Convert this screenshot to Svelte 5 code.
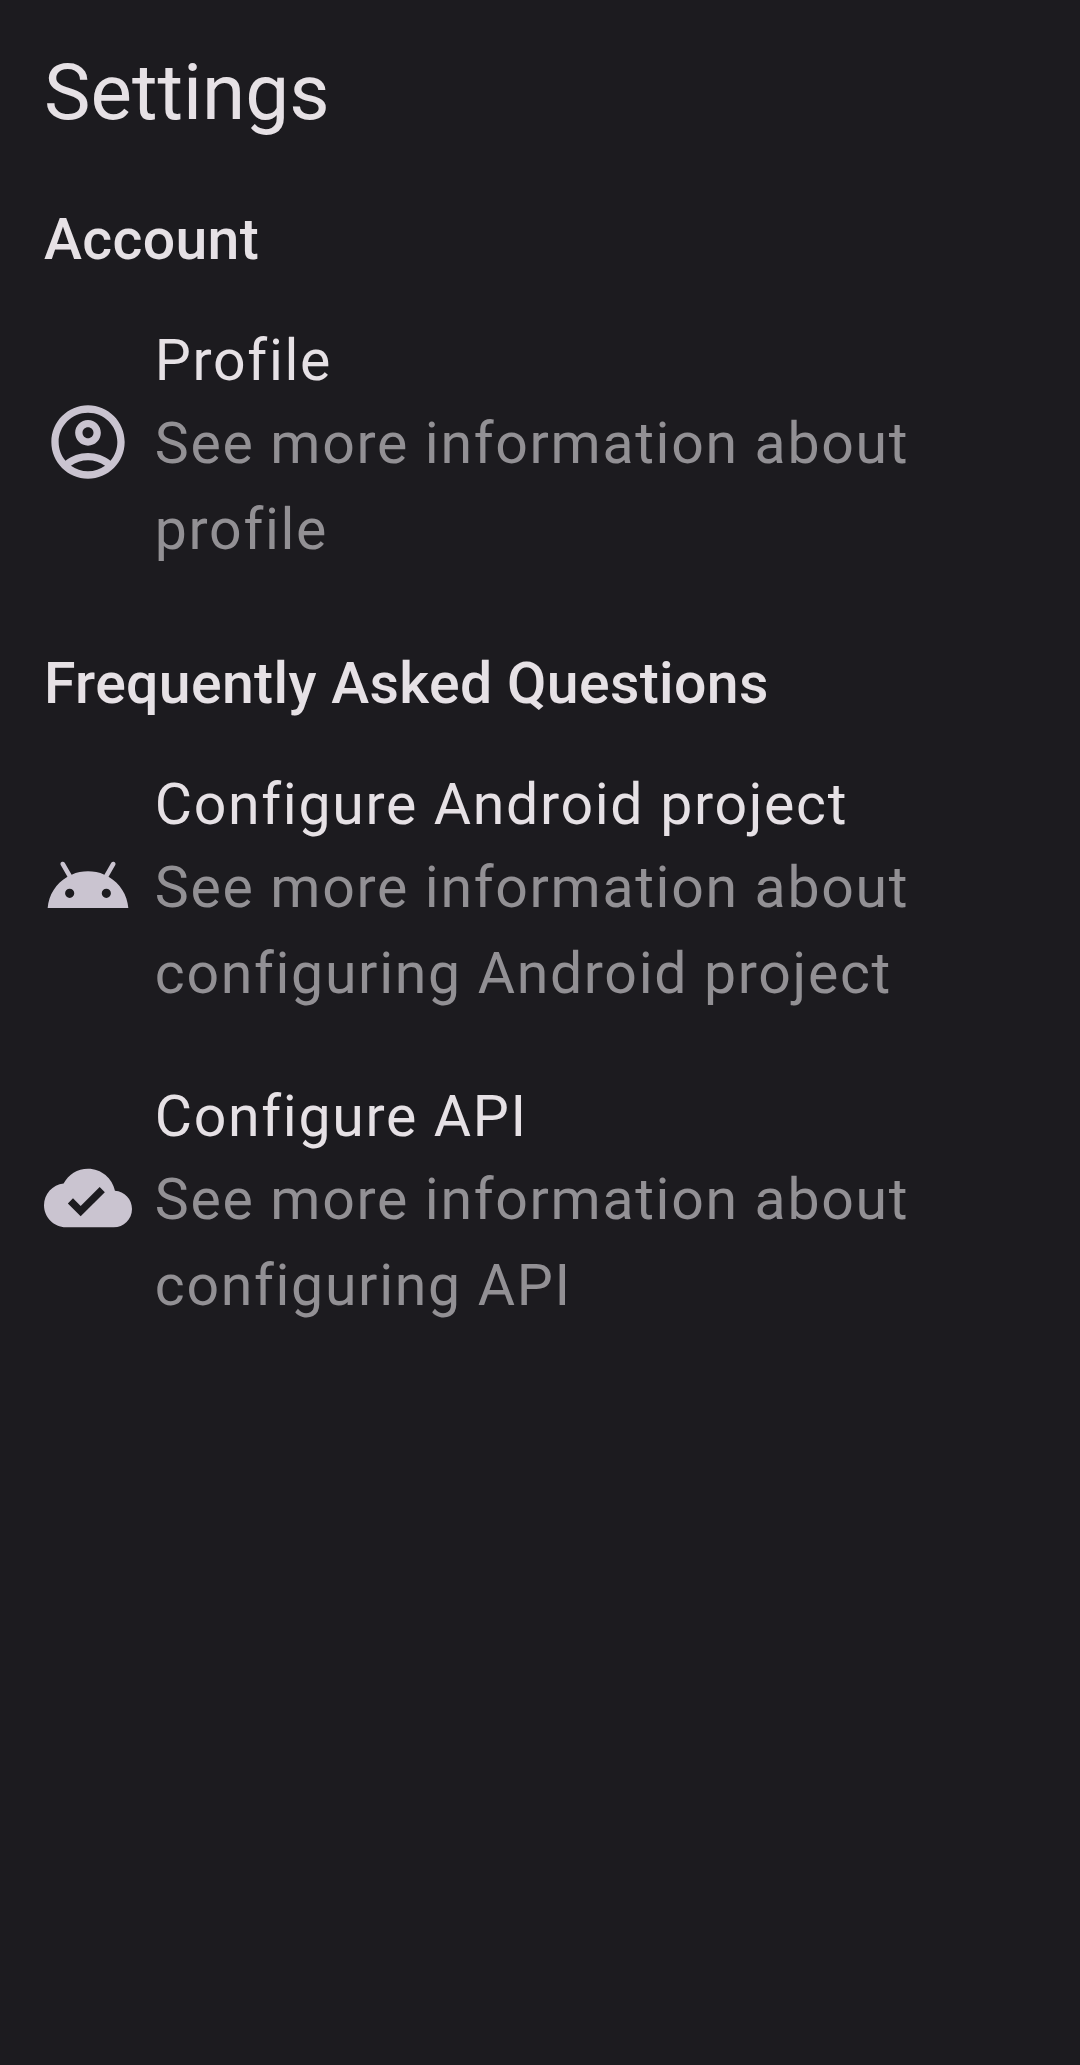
<script>
  const sections = [
    {
      title: 'Account',
      items: [{ icon: 'profile', title: 'Profile', text: 'See more information about profile' }]
    },
    {
      title: 'Frequently Asked Questions',
      items: [
        {
          icon: 'android',
          title: 'Configure Android project',
          text: 'See more information about configuring Android project'
        },
        { icon: 'cloud', title: 'Configure API', text: 'See more information about configuring API' }
      ]
    }
  ];

  const icons = {
    profile:
      'M12 2C6.48 2 2 6.48 2 12s4.48 10 10 10 10-4.48 10-10S17.52 2 12 2zM7.35 18.5C8.66 17.56 10.26 17 12 17s3.34.56 4.65 1.5C15.34 19.44 13.74 20 12 20s-3.34-.56-4.65-1.5zm10.79-1.38C16.45 15.8 14.32 15 12 15s-4.45.8-6.14 2.12C4.7 15.73 4 13.95 4 12c0-4.42 3.58-8 8-8s8 3.58 8 8c0 1.95-.7 3.73-1.86 5.12zM12 6c-1.93 0-3.5 1.57-3.5 3.5S10.07 13 12 13s3.5-1.57 3.5-3.5S13.93 6 12 6zm0 5c-.83 0-1.5-.67-1.5-1.5S11.17 8 12 8s1.5.67 1.5 1.5S12.83 11 12 11z',
    android:
      'M17.6 9.48l1.84-3.18c.16-.31.04-.69-.26-.85-.29-.15-.65-.06-.83.22l-1.88 3.24c-2.86-1.21-6.08-1.21-8.94 0L5.65 5.67c-.19-.29-.58-.38-.87-.2-.28.18-.37.54-.22.83L6.4 9.48C3.3 11.25 1.28 14.44 1 18h22c-.28-3.56-2.3-6.75-5.4-8.52zM7 15.25a1.25 1.25 0 1 1 0-2.5 1.25 1.25 0 0 1 0 2.5zm10 0a1.25 1.25 0 1 1 0-2.5 1.25 1.25 0 0 1 0 2.5z',
    cloud:
      'M19.35 10.04C18.67 6.59 15.64 4 12 4 9.11 4 6.6 5.64 5.35 8.04 2.34 8.36 0 10.91 0 14c0 3.31 2.69 6 6 6h13c2.76 0 5-2.24 5-5 0-2.64-2.05-4.78-4.65-4.96zM10 17l-3.5-3.5 1.41-1.41L10 14.17 15.18 9l1.41 1.41L10 17z'
  };
</script>

<main>
  <h1>Settings</h1>
  {#each sections as section}
    <section>
      <h2>{section.title}</h2>
      {#each section.items as item}
        <div class="item">
          <svg viewBox="0 0 24 24" aria-hidden="true"><path fill-rule="evenodd" d={icons[item.icon]} /></svg>
          <div class="copy">
            <h3>{item.title}</h3>
            <p>{item.text}</p>
          </div>
        </div>
      {/each}
    </section>
  {/each}
</main>

<style>
  :global(body) {
    background: #1c1b1f;
  }
  main {
    box-sizing: border-box;
    min-height: 2065px;
    padding: 44px 44px 0;
    background: #1c1b1f;
    color: #e6e1e5;
    font-family: Roboto, sans-serif;
  }
  h1,
  h2,
  h3,
  p {
    margin: 0;
    font-weight: 400;
  }
  h1 {
    padding-bottom: 1px;
    font-size: 78.2px;
    line-height: 96px;
  }
  h2 {
    padding-top: 65px;
    font-size: 57.2px;
    font-weight: 500;
    line-height: 67px;
    letter-spacing: 0.34px;
  }
  .item {
    display: flex;
    align-items: center;
    gap: 22.8px;
    padding: 38px 0 12.25px;
  }
  svg {
    flex: none;
    width: 88px;
    height: 88px;
    fill: #cac4d0;
  }
  .copy {
    flex: 1;
    padding-top: 9px;
    font-size: 57.2px;
    letter-spacing: 1.68px;
  }
  h3 {
    font-size: 57.2px;
    line-height: 81px;
  }
  p {
    max-width: 800px;
    margin-top: -0.25px;
    color: #929094;
    line-height: 86px;
  }
</style>
